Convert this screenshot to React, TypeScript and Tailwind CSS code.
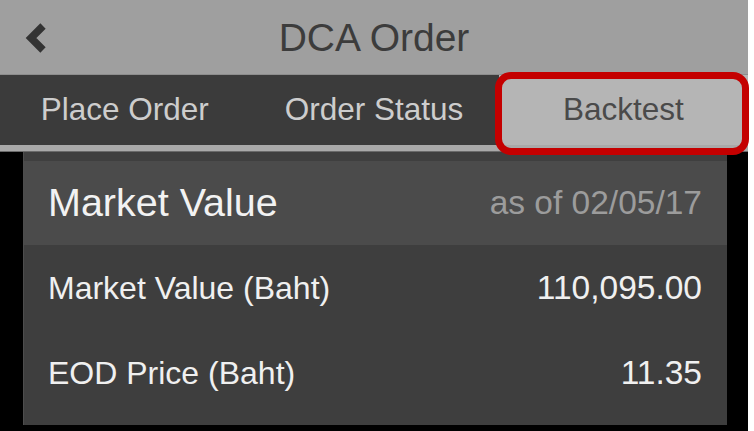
const rows = [
  {label: "Market Value (Baht)", value: "110,095.00"},
  {label: "EOD Price (Baht)", value: "11.35"}
]

const tabs = ["Place Order", "Order Status", "Backtest"]

export default function App() {
  return (
    <div className="relative flex w-[754px] h-[431px] bg-white overflow-hidden font-['Liberation_Sans',Arial,sans-serif]">
      <div className="flex flex-col w-[748px] h-full bg-black">
        {/* nav bar */}
        <div className="relative flex items-center justify-center h-[75px] bg-[#9f9f9f] border-b border-[#8d8d8d]">
          <svg
            className="absolute left-[24px] top-[22px]"
            width="24"
            height="32"
            viewBox="0 0 24 32"
          >
            <path d="M19 4 L7 16 L19 28" fill="none" stroke="#333333" strokeWidth="7.5"/>
          </svg>
          <span className="text-[39px] leading-none text-[#3c3c3c]">DCA Order</span>
        </div>

        {/* segmented tabs */}
        <div className="grid grid-cols-3 h-[70px] bg-[#3b3b3b]">
          {tabs.map((tab, index) => (
            <div
              key={tab}
              className={
                index === 2
                  ? "flex items-center justify-center bg-[#b5b5b5] text-[#4a4a4a] text-[31.5px]"
                  : "flex items-center justify-center text-[#cdcdcd] text-[31.5px]"
              }
            >
              {tab}
            </div>
          ))}
        </div>
        <div className="h-[7px] bg-[#a9a9a9] border-b border-[#6a6a6a]"/>

        {/* market value card */}
        <div className="pl-[23px] pr-[21px]">
          <div className="flex flex-col h-[273px] bg-[#3e3e3e] border-l border-[#4d4d4d]">
            <div className="h-[9px] bg-[#3f3f3f]"/>
            <div className="flex items-center justify-between h-[84px] pl-[24px] pr-[25px] bg-[#4b4b4b]">
              <span className="text-[39.5px] leading-none text-[#f2f2f2]">Market Value</span>
              <span className="text-[33.5px] leading-none text-[#9c9c9c]">as of 02/05/17</span>
            </div>
            {rows.map((row) => (
              <div key={row.label} className="flex items-center justify-between h-[85px] pl-[24px] pr-[25px]">
                <span className="text-[32px] leading-none text-[#f0f0f0]">{row.label}</span>
                <span className="text-[33.5px] leading-none text-[#f0f0f0]">{row.value}</span>
              </div>
            ))}
          </div>
        </div>
      </div>

      {/* highlight annotation */}
      <div className="absolute left-[495px] top-[72px] w-[254px] h-[83px] border-[7px] border-[#c40000] rounded-[16px]"/>
    </div>
  )
}
